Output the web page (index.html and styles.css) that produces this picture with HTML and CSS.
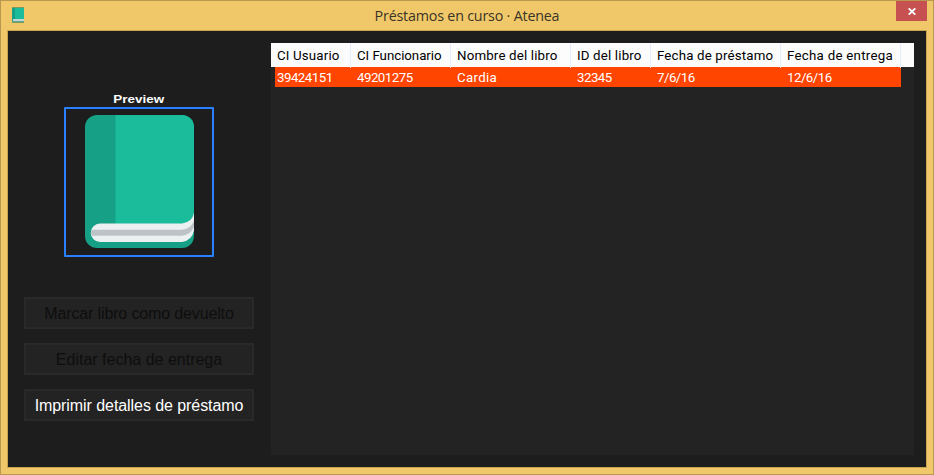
FILE: index.html
```
<!DOCTYPE html>
<html lang="es">
<head>
<meta charset="utf-8">
<title>Préstamos en curso · Atenea</title>
<link rel="stylesheet" href="styles.css">
</head>
<body>
<div class="window">
  <header class="titlebar">
    <svg class="app-icon" viewBox="0 0 12 16" shape-rendering="crispEdges">
      <path fill="#7d9a5c" d="M0 0h12v16H0z"/>
      <path fill="#1abc9c" d="M0 1h12v11H0z"/>
      <path fill="#16a085" d="M0 1h3v14H0z"/>
      <path fill="#c5d5d5" d="M1 12h11v2H1z"/>
      <path fill="#58aa94" d="M0 14h12v1H0z"/>
    </svg>
    <h1 class="title">Préstamos en curso · Atenea</h1>
    <button class="close" aria-label="Cerrar">
      <svg viewBox="0 0 8 7" width="8" height="7"><path d="M.7 .3 7.3 6.7M7.3 .3 .7 6.7" stroke="#fff" stroke-width="1.8"/></svg>
    </button>
  </header>
  <main class="client">
    <aside class="side">
      <div class="caption"><span>Preview</span></div>
      <div class="preview">
        <svg viewBox="0 0 146 146" width="146" height="146">
          <rect x="19" y="6" width="109" height="133" rx="12" fill="#16a085"/>
          <path fill="#1abc9c" d="M49.500 6H116a12 12 0 0 1 12 12v86q-2 10-12 11H49.500z"/>
          <path fill="#ecf0f1" d="M34 114.500h82q10-1 12-10.500v17.500q-2 10-12 11.500H34a9.250 9.250 0 0 1 0-18.500z"/>
          <path fill="#bdc3c7" d="M26 120.700h90q9-1 12-9v6q-3 8-12 9H26q-2-3 0-6z"/>
        </svg>
      </div>
      <div class="actions">
        <button class="action" disabled><span class="mark">Marcar libro como devuelto</span></button>
        <button class="action" disabled><span class="edit">Editar fecha de entrega</span></button>
        <button class="action"><span class="print">Imprimir detalles de préstamo</span></button>
      </div>
    </aside>
    <section class="list">
      <div class="row head">
        <span>CI Usuario</span><span class="staff">CI Funcionario</span><span>Nombre del libro</span><span>ID del libro</span><span>Fecha de préstamo</span><span class="due">Fecha de entrega</span>
      </div>
      <div class="row selected">
        <span>39424151</span><span>49201275</span><span class="book">Cardia</span><span>32345</span><span>7/6/16</span><span>12/6/16</span>
      </div>
    </section>
  </main>
</div>
</body>
</html>
```
FILE: styles.css
```
* { box-sizing: border-box; }
body { margin: 0; overflow: hidden; }
button { margin: 0; padding: 0; border: 0; }
svg { display: block; }

.window {
  width: 934px;
  height: 475px;
  padding: 0 6px 6px;
  border: 1px solid #b8984f;
  background: #f0c869;
}

.titlebar {
  display: grid;
  grid-template-columns: 180px 1fr 180px;
  height: 29px;
}
.app-icon { width: 12px; height: 16px; margin: 6px 0 0 5px; }
.title {
  margin: 0;
  padding-top: 1px;
  font: 400 14.3px/28px "Open Sans", sans-serif;
  letter-spacing: -0.2px;
  text-align: center;
  white-space: nowrap;
  color: #3a3426;
}
.close {
  display: flex;
  align-items: center;
  justify-content: center;
  justify-self: end;
  width: 31px;
  height: 20px;
  background: #c75050;
}

.client {
  display: flex;
  height: 438px;
  padding: 12px 12px 11px 16px;
  border: 1px solid #c9a450;
  background: #1d1d1d;
}
.side { width: 230px; margin-right: 17px; }
.caption {
  height: 64px;
  padding-top: 49px;
  font: 700 12px/15px "Liberation Sans", sans-serif;
  text-align: center;
  color: #fff;
}
.caption span { display: inline-block; transform: scale(1.12, 0.97); }
.preview {
  width: 150px;
  height: 150px;
  margin-left: 40px;
  border: 2px solid #2a80ff;
  border-radius: 1px;
}
.actions { display: grid; gap: 14px; margin-top: 40px; }
.action {
  height: 32px;
  padding-top: 2px;
  border: 2px solid #292929;
  background: #232323;
  font: 16px/26px "Liberation Sans", sans-serif;
  white-space: nowrap;
  color: #fff;
}
.action:disabled { color: #0e0e0e; }
.mark { letter-spacing: -0.14px; }
.print { letter-spacing: -0.07px; }

.list { width: 643px; height: 412px; background: #232323; }
.row {
  display: grid;
  grid-template-columns: 80px 100px 120px 80px 130px 120px;
  font: 13.3px/21px Roboto, sans-serif;
  white-space: nowrap;
}
.head {
  height: 24px;
  background: #fcfcfd;
  color: #000;
  line-height: 25px;
  letter-spacing: 0.16px;
}
.head span { padding-left: 6px; border-right: 1px solid #e5ecfb; }
.head .staff { letter-spacing: -0.04px; }
.head .due { letter-spacing: 0.26px; }
.selected {
  width: 626px;
  height: 20px;
  margin-left: 4px;
  grid-template-columns: 76px 100px 120px 80px 130px 120px;
  background: #ff4500;
  color: #fff;
  letter-spacing: -0.52px;
}
.selected span { padding-left: 6px; }
.selected span:first-child { padding-left: 2px; }
.selected .book { letter-spacing: 0.3px; }
```
